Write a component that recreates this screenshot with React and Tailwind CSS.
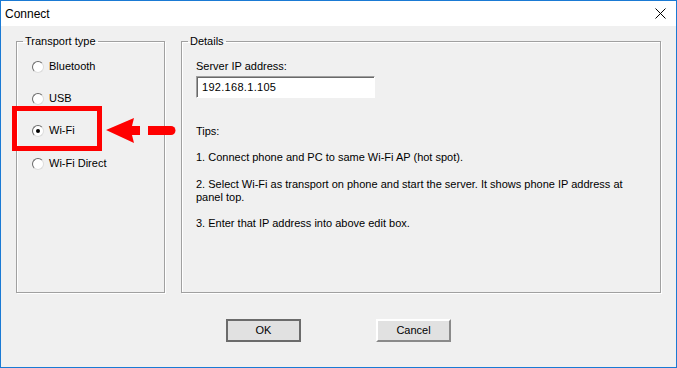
import React from 'react';

const font = { fontFamily: '"Liberation Sans", Arial, sans-serif' };

function Radio({ label, checked }) {
  return (
    <div className="flex items-center h-[13px]">
      <span className="flex items-center justify-center w-[12px] h-[12px] rounded-full bg-white border border-t-[#6a6a6a] border-l-[#6a6a6a] border-r-[#dcdcdc] border-b-[#dcdcdc]">
        {checked && <span className="w-[4px] h-[4px] rounded-full bg-black" />}
      </span>
      <span className="ml-[5px] text-[11px] leading-[13px] text-black">{label}</span>
    </div>
  );
}

function GroupBox({ title, className, children }) {
  return (
    <fieldset
      className={`border border-[#a0a0a0] shadow-[inset_1px_1px_0_#ffffff,1px_1px_0_#ffffff] ${className}`}
    >
      <legend className="ml-[6px] px-[2px] text-[11px] leading-[13px] text-black">{title}</legend>
      {children}
    </fieldset>
  );
}

export default function App() {
  return (
    <div
      className="relative w-[677px] h-[368px] flex flex-col border border-[#1a7ad4] bg-[#f0f0f0] overflow-hidden"
      style={font}
    >
      {/* Title bar */}
      <div className="h-[25px] bg-white flex items-center justify-between pl-[4px] pr-[10px]">
        <span className="text-[12px] text-black">Connect</span>
        <svg width="11" height="11" viewBox="0 0 11 11" className="mb-[1px]">
          <path d="M0.5 0.5 L10.5 10.5 M10.5 0.5 L0.5 10.5" stroke="#000" strokeWidth="1" />
        </svg>
      </div>

      {/* Body */}
      <div className="flex-1 flex flex-col pl-[15px] pt-[9px]">
        <div className="flex">
          <GroupBox title="Transport type" className="w-[149px] h-[258px]">
            <div className="flex flex-col pl-[15px] pt-[12px] gap-[19px]">
              <Radio label="Bluetooth" />
              <Radio label="USB" />
              <Radio label="Wi-Fi" checked />
              <div className="mt-[1px]">
                <Radio label="Wi-Fi Direct" />
              </div>
            </div>
          </GroupBox>

          <GroupBox title="Details" className="ml-[16px] w-[480px] h-[258px]">
            <div className="flex flex-col pl-[14px] pt-[12px] text-[11px] leading-[13px] text-black">
              <span>Server IP address:</span>
              <div className="mt-[3px] w-[179px] h-[22px] bg-white border border-t-[#a0a0a0] border-l-[#a0a0a0] border-r-white border-b-white shadow-[inset_1px_1px_0_#696969] flex items-center pl-[5px]">
                <span className="tracking-[0.3px]">192.168.1.105</span>
              </div>
              <span className="mt-[27px]">Tips:</span>
              <span className="mt-[13px]">1. Connect phone and PC to same Wi-Fi AP (hot spot).</span>
              <span className="mt-[14px]">
                2. Select Wi-Fi as transport on phone and start the server. It shows phone IP address at
                <br />
                panel top.
              </span>
              <span className="mt-[13px]">3. Enter that IP address into above edit box.</span>
            </div>
          </GroupBox>
        </div>

        {/* Buttons */}
        <div className="flex justify-center gap-[75px] mt-[26px] pr-[15px]">
          <button className="w-[75px] h-[23px] bg-[#e1e1e1] border-2 border-[#6b6b6b] text-[11px] text-black">
            OK
          </button>
          <button className="w-[75px] h-[23px] bg-[#e1e1e1] border-2 border-t-white border-l-white border-r-[#8a8a8a] border-b-[#8a8a8a] text-[11px] text-black">
            Cancel
          </button>
        </div>
      </div>

      {/* Annotation: red highlight and arrow */}
      <div className="absolute left-[11px] top-[105px] w-[90px] h-[45px] border-[5px] border-[#ff0000]" />
      <svg className="absolute left-[104px] top-[115px]" width="74" height="30" viewBox="0 0 74 30">
        <polygon points="1,14 29,2 27,10 35,10 35,19 27,19 29,27" fill="#ff0000" />
        <path d="M43 10 H66 A4.5 4.5 0 0 1 66 19 H43 Z" fill="#ff0000" />
      </svg>
    </div>
  );
}
